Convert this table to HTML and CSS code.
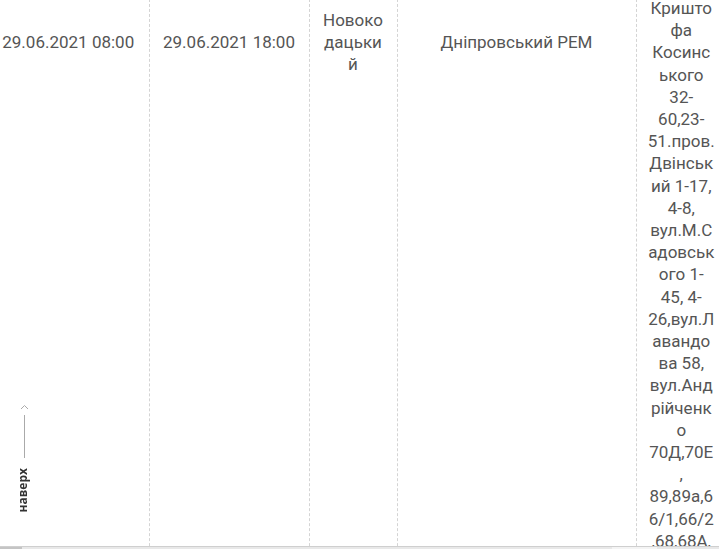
FILE: index.html
```html
<!DOCTYPE html>
<html lang="uk">

<head>
    <meta charset="UTF-8">
    <meta name="viewport" content="width=device-width, initial-scale=1.0">
    <title>Відключення</title>
    <link rel="stylesheet" href="styles.css">
</head>

<body>
    <table class="outages">
        <colgroup>
            <col class="col-start">
            <col class="col-end">
            <col class="col-city">
            <col class="col-rem">
            <col class="col-streets">
        </colgroup>
        <tbody>
            <tr>
                <td class="cell-mid">29.06.2021 08:00</td>
                <td class="cell-mid">29.06.2021 18:00</td>
                <td class="cell-city">Новокодацький</td>
                <td class="cell-mid">Дніпровський РЕМ</td>
                <td class="cell-streets">Кришто<br>фа<br>Косинс<br>ького<br>32-<br>60,23-<br>51.пров.<br>Двінськ<br>ий 1-17,<br>4-8,<br>вул.М.С<br>адовськ<br>ого 1-<br>45, 4-<br>26,вул.Л<br>авандо<br>ва 58,<br>вул.Анд<br>рійченк<br>о<br>70Д,70Е<br>,<br>89,89а,6<br>6/1,66/2<br>,68,68А,<br>70,72,74,<br>76</td>
            </tr>
        </tbody>
    </table>

    <a class="to-top" href="#">
        <svg class="to-top-arrow" width="9" height="6" viewBox="0 0 9 6">
            <path d="M1 5 L4.5 1.5 L8 5" fill="none" stroke="#aaa" stroke-width="1"/>
        </svg>
        <span class="to-top-line"></span>
        <span class="to-top-text">наверх</span>
    </a>

    <div class="hscroll"><span class="hscroll-start"></span><span class="hscroll-thumb"></span></div>
</body>

</html>
```

FILE: styles.css
```css
html,
body {
    margin: 0;
    padding: 0;
    overflow: hidden;
    background: #fff;
}

body {
    font-family: Roboto, "Liberation Sans", sans-serif;
    color: #555;
}

.outages {
    border-collapse: collapse;
    table-layout: fixed;
    width: 738px;
    margin: -11px 0 0 -12px;
    font-size: 17px;
    line-height: 22.2px;
}

.col-start { width: 161px; }
.col-end { width: 160px; }
.col-city { width: 88px; }
.col-rem { width: 239px; }
.col-streets { width: 90px; }

.outages td {
    vertical-align: top;
    text-align: center;
    padding: 0 11px 20px;
    border-left: 1px dashed #d4d4d4;
    overflow-wrap: break-word;
    word-wrap: break-word;
}

.outages td:first-child {
    border-left: none;
}

.cell-mid {
    padding-top: 42px !important;
}

.cell-city {
    padding-top: 19.5px !important;
}

.cell-streets {
    padding-top: 8px !important;
}

.to-top {
    position: fixed;
    left: 15px;
    top: 404px;
    width: 16px;
    display: flex;
    flex-direction: column;
    align-items: center;
    text-decoration: none;
}

.to-top-arrow {
    display: block;
    margin-left: 2px;
}

.to-top-line {
    width: 1px;
    height: 43px;
    margin: 5px 0 0 2px;
    background: #aaa;
}

.to-top-text {
    margin-top: 10px;
    writing-mode: vertical-rl;
    transform: rotate(180deg);
    font-family: "Open Sans", Roboto, sans-serif;
    font-size: 12px;
    font-weight: bold;
    color: #333;
    line-height: 14px;
}

.hscroll {
    position: fixed;
    left: 0;
    right: 0;
    bottom: 0;
    height: 2px;
    border-top: 1px solid #cfcfcf;
    background: #e8e8e8;
}

.hscroll-start {
    position: absolute;
    left: 0;
    top: 0;
    width: 22px;
    height: 2px;
    background: #c4c4c4;
}

.hscroll-thumb {
    position: absolute;
    left: 612px;
    top: 0;
    width: 45px;
    height: 2px;
    background: #f4f4f4;
}
```
